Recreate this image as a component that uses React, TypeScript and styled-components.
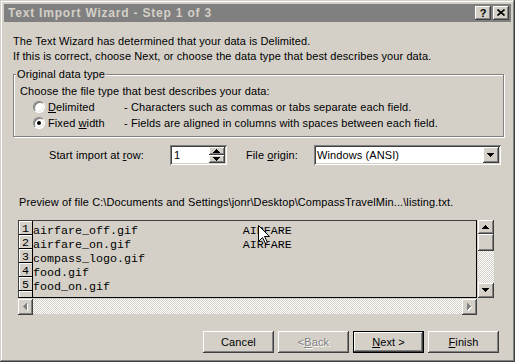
import React from 'react';
import styled, { createGlobalStyle, css } from 'styled-components';

const GlobalStyle = createGlobalStyle`
  html, body { margin: 0; padding: 0; background: #d4d0c8; }
  body { font-family: "Liberation Sans", Arial, sans-serif; font-size: 11px; letter-spacing: 0.1px; color: #000; }
  * { box-sizing: border-box; }
`;

const raised = css`
  background: #d4d0c8;
  box-shadow: inset -1px -1px #404040, inset 1px 1px #fff, inset -2px -2px #808080, inset 2px 2px #d4d0c8;
`;

const sunken = css`
  box-shadow: inset 1px 1px #808080, inset -1px -1px #fff, inset 2px 2px #404040, inset -2px -2px #d4d0c8;
`;

const Window = styled.div`
  width: 515px;
  height: 362px;
  background: #d4d0c8;
  padding: 4px;
  display: flex;
  flex-direction: column;
  overflow: hidden;
  box-shadow: inset -1px -1px #404040, inset 1px 1px #d4d0c8, inset -2px -2px #808080, inset 2px 2px #fff;
`;

const TitleBar = styled.div`
  height: 18px;
  background: #808080;
  display: flex;
  align-items: center;
  padding: 0 2px 0 4px;
`;

const TitleText = styled.div`
  flex: 1;
  color: #d4d0c8;
  font-weight: bold;
  font-size: 12px;
  letter-spacing: 0.8px;
`;

const TitleButtons = styled.div`
  display: flex;
  gap: 2px;
`;

const TitleButton = styled.div`
  ${raised};
  width: 16px;
  height: 14px;
  display: flex;
  align-items: center;
  justify-content: center;
  font-weight: bold;
  font-size: 11px;
  letter-spacing: 0;
  padding-bottom: 1px;
`;

const Body = styled.div`
  flex: 1;
  display: flex;
  flex-direction: column;
  padding: 12px 7px 0 9px;
`;

const Intro = styled.div`
  line-height: 15px;
`;

const GroupBox = styled.fieldset`
  margin: 4px 0 0 0;
  padding: 0 6px 5px 6px;
  border: 1px solid #808080;
  box-shadow: inset 1px 1px #fff, 1px 1px #fff;
`;

const Legend = styled.legend`
  padding: 0 1px;
  margin-left: -4px;
  line-height: 13px;
  background: #d4d0c8;
`;

const Line = styled.div<{ $top?: number }>`
  line-height: 15px;
  margin-top: ${(p) => p.$top ?? 0}px;
`;

const RadioRow = styled.div`
  display: flex;
  align-items: center;
  height: 16px;
  padding-left: 13px;
`;

const RadioDot = styled.span<{ $on?: boolean }>`
  width: 12px;
  height: 12px;
  border-radius: 50%;
  background: #fff;
  margin-right: 3px;
  position: relative;
  box-shadow: inset 1px 1px #808080, inset -1px -1px #e8e6e0;
  border: 1px solid;
  border-color: #808080 #fff #fff #808080;
  &::after {
    content: '';
    display: ${(p) => (p.$on ? 'block' : 'none')};
    position: absolute;
    left: 3px;
    top: 3px;
    width: 4px;
    height: 4px;
    border-radius: 50%;
    background: #000;
  }
`;

const RadioLabel = styled.span`
  width: 76px;
`;

const Desc = styled.span``;

const Key = styled.span`
  text-decoration: underline;
  text-underline-offset: 1px;
`;

const ImportRow = styled.div`
  display: flex;
  align-items: center;
  height: 20px;
  margin-top: 8px;
  padding-left: 36px;
`;

const FieldLabel = styled.span<{ $w: number }>`
  width: ${(p) => p.$w}px;
`;

const Spinner = styled.div`
  ${sunken};
  background: #fff;
  width: 57px;
  height: 20px;
  display: flex;
  align-items: center;
  padding: 2px 2px 2px 4px;
  margin-right: 19px;
`;

const SpinValue = styled.span`
  flex: 1;
`;

const SpinButtons = styled.div`
  display: flex;
  flex-direction: column;
  width: 16px;
  height: 16px;
`;

const SpinButton = styled.div`
  ${raised};
  flex: 1;
  display: flex;
  align-items: center;
  justify-content: center;
`;

const Select = styled.div`
  ${sunken};
  background: #fff;
  width: 187px;
  height: 20px;
  display: flex;
  align-items: center;
  padding: 2px 2px 2px 3px;
`;

const SelectText = styled.span`
  flex: 1;
`;

const ScrollButton = styled.div<{ $w?: number; $h?: number }>`
  ${raised};
  width: ${(p) => p.$w ?? 16}px;
  height: ${(p) => p.$h ?? 16}px;
  flex: none;
  display: flex;
  align-items: center;
  justify-content: center;
`;

const PreviewLabel = styled.div`
  line-height: 15px;
  margin-top: 30px;
  padding-left: 6px;
`;

const Preview = styled.div`
  position: relative;
  margin: 10px 0 0 5px;
  width: 477px;
  display: grid;
  grid-template-columns: 459px 17px;
  grid-template-rows: 78px 16px;
`;

const DataArea = styled.div`
  border: 1px solid #000;
  border-top-color: #404040;
  border-left-color: #404040;
  overflow: hidden;
  font-family: "Liberation Mono", "Courier New", monospace;
  font-size: 11.67px;
  letter-spacing: 0;
`;

const DataRow = styled.div`
  display: flex;
  height: 14px;
  align-items: stretch;
`;

const RowNum = styled.div`
  width: 14px;
  flex: none;
  border-right: 1px solid #000;
  border-bottom: 1px solid #000;
  box-shadow: inset 1px 1px #fff;
  display: flex;
  align-items: center;
  justify-content: center;
  padding-top: 3px;
`;

const RowText = styled.div`
  white-space: pre;
  line-height: 14px;
  padding-top: 3px;
`;

const VScroll = styled.div`
  display: flex;
  flex-direction: column;
  padding-left: 1px;
`;

const Track = styled.div`
  flex: 1;
  background: repeating-conic-gradient(#fff 0% 25%, #d4d0c8 0% 50%) 0 0 / 2px 2px;
`;

const HScroll = styled.div`
  display: flex;
  padding-top: 1px;
`;

const Cursor = styled.svg`
  position: absolute;
  left: 240px;
  top: 5px;
`;

const ButtonRow = styled.div`
  display: flex;
  justify-content: flex-end;
  gap: 4px;
  margin-top: 17px;
  padding-right: 5px;
`;

const PushButton = styled.div<{ $default?: boolean; $disabled?: boolean }>`
  ${raised};
  width: 71px;
  height: 22px;
  display: flex;
  align-items: center;
  justify-content: center;
  color: ${(p) => (p.$disabled ? '#808080' : '#000')};
  text-shadow: ${(p) => (p.$disabled ? '1px 1px #fff' : 'none')};
  ${(p) =>
    p.$default &&
    css`
      box-shadow: inset 0 0 0 1px #000, inset -2px -2px #404040, inset 2px 2px #fff, inset -3px -3px #808080;
    `}
`;

type Dir = 'up' | 'down' | 'left' | 'right';

const Arrow = ({ dir, disabled }: { dir: Dir; disabled?: boolean }) => {
  const vertical = dir === 'up' || dir === 'down';
  const w = vertical ? 7 : 4;
  const h = vertical ? 4 : 7;
  const pts: Record<Dir, string> = {
    up: '3.5,0 7,4 0,4',
    down: '0,0 7,0 3.5,4',
    left: '4,0 4,7 0,3.5',
    right: '0,0 0,7 4,3.5',
  };
  return (
    <svg width={w + 1} height={h + 1} viewBox={`0 0 ${w + 1} ${h + 1}`} shapeRendering="crispEdges">
      {disabled && <polygon points={pts[dir]} fill="#fff" transform="translate(1,1)" />}
      <polygon points={pts[dir]} fill={disabled ? '#808080' : '#000'} />
    </svg>
  );
};

const rows = [
  'airfare_off.gif               AIRFARE',
  'airfare_on.gif                AIRFARE',
  'compass_logo.gif',
  'food.gif',
  'food_on.gif',
  '',
];

export default function App() {
  return (
    <>
      <GlobalStyle />
      <Window>
        <TitleBar>
          <TitleText>Text Import Wizard - Step 1 of 3</TitleText>
          <TitleButtons>
            <TitleButton>?</TitleButton>
            <TitleButton>
              <svg width="8" height="7" viewBox="0 0 8 7">
                <path d="M0.5 0.5 L7.5 6.5 M7.5 0.5 L0.5 6.5" stroke="#000" strokeWidth="1.6" />
              </svg>
            </TitleButton>
          </TitleButtons>
        </TitleBar>
        <Body>
          <Intro>
            The Text Wizard has determined that your data is Delimited.
            <br />
            If this is correct, choose Next, or choose the data type that best describes your data.
          </Intro>
          <GroupBox>
            <Legend>Original data type</Legend>
            <Line $top={3}>Choose the file type that best describes your data:</Line>
            <RadioRow>
              <RadioDot />
              <RadioLabel>
                <Key>D</Key>elimited
              </RadioLabel>
              <Desc>- Characters such as commas or tabs separate each field.</Desc>
            </RadioRow>
            <RadioRow>
              <RadioDot $on />
              <RadioLabel>
                Fixed <Key>w</Key>idth
              </RadioLabel>
              <Desc>- Fields are aligned in columns with spaces between each field.</Desc>
            </RadioRow>
          </GroupBox>
          <ImportRow>
            <FieldLabel $w={121}>
              Start import at <Key>r</Key>ow:
            </FieldLabel>
            <Spinner>
              <SpinValue>1</SpinValue>
              <SpinButtons>
                <SpinButton>
                  <Arrow dir="up" />
                </SpinButton>
                <SpinButton>
                  <Arrow dir="down" />
                </SpinButton>
              </SpinButtons>
            </Spinner>
            <FieldLabel $w={68}>
              File <Key>o</Key>rigin:
            </FieldLabel>
            <Select>
              <SelectText>Windows (ANSI)</SelectText>
              <ScrollButton>
                <Arrow dir="down" />
              </ScrollButton>
            </Select>
          </ImportRow>
          <PreviewLabel>
            Preview of file C:\Documents and Settings\jonr\Desktop\CompassTravelMin...\listing.txt.
          </PreviewLabel>
          <Preview>
            <DataArea>
              {rows.map((r, i) => (
                <DataRow key={i}>
                  <RowNum>{r ? i + 1 : ''}</RowNum>
                  <RowText>{r}</RowText>
                </DataRow>
              ))}
            </DataArea>
            <VScroll>
              <ScrollButton $h={14}>
                <Arrow dir="up" />
              </ScrollButton>
              <ScrollButton $h={17} />
              <Track />
              <ScrollButton $h={15}>
                <Arrow dir="down" />
              </ScrollButton>
            </VScroll>
            <HScroll>
              <ScrollButton $w={15}>
                <Arrow dir="left" disabled />
              </ScrollButton>
              <Track />
              <ScrollButton $w={15}>
                <Arrow dir="right" disabled />
              </ScrollButton>
            </HScroll>
            <div />
            <Cursor width="13" height="20" viewBox="0 0 13 20">
              <path
                d="M0.5 0.5 L0.5 16.5 L4.5 12.5 L7.5 18.5 L9.5 17.5 L6.5 11.5 L11.5 11.5 Z"
                fill="#fff"
                stroke="#000"
                strokeWidth="1"
              />
            </Cursor>
          </Preview>
          <ButtonRow>
            <PushButton>Cancel</PushButton>
            <PushButton $disabled>
              &lt; <Key>B</Key>ack
            </PushButton>
            <PushButton $default>
              <Key>N</Key>ext &gt;
            </PushButton>
            <PushButton>
              <Key>F</Key>inish
            </PushButton>
          </ButtonRow>
        </Body>
      </Window>
    </>
  );
}
